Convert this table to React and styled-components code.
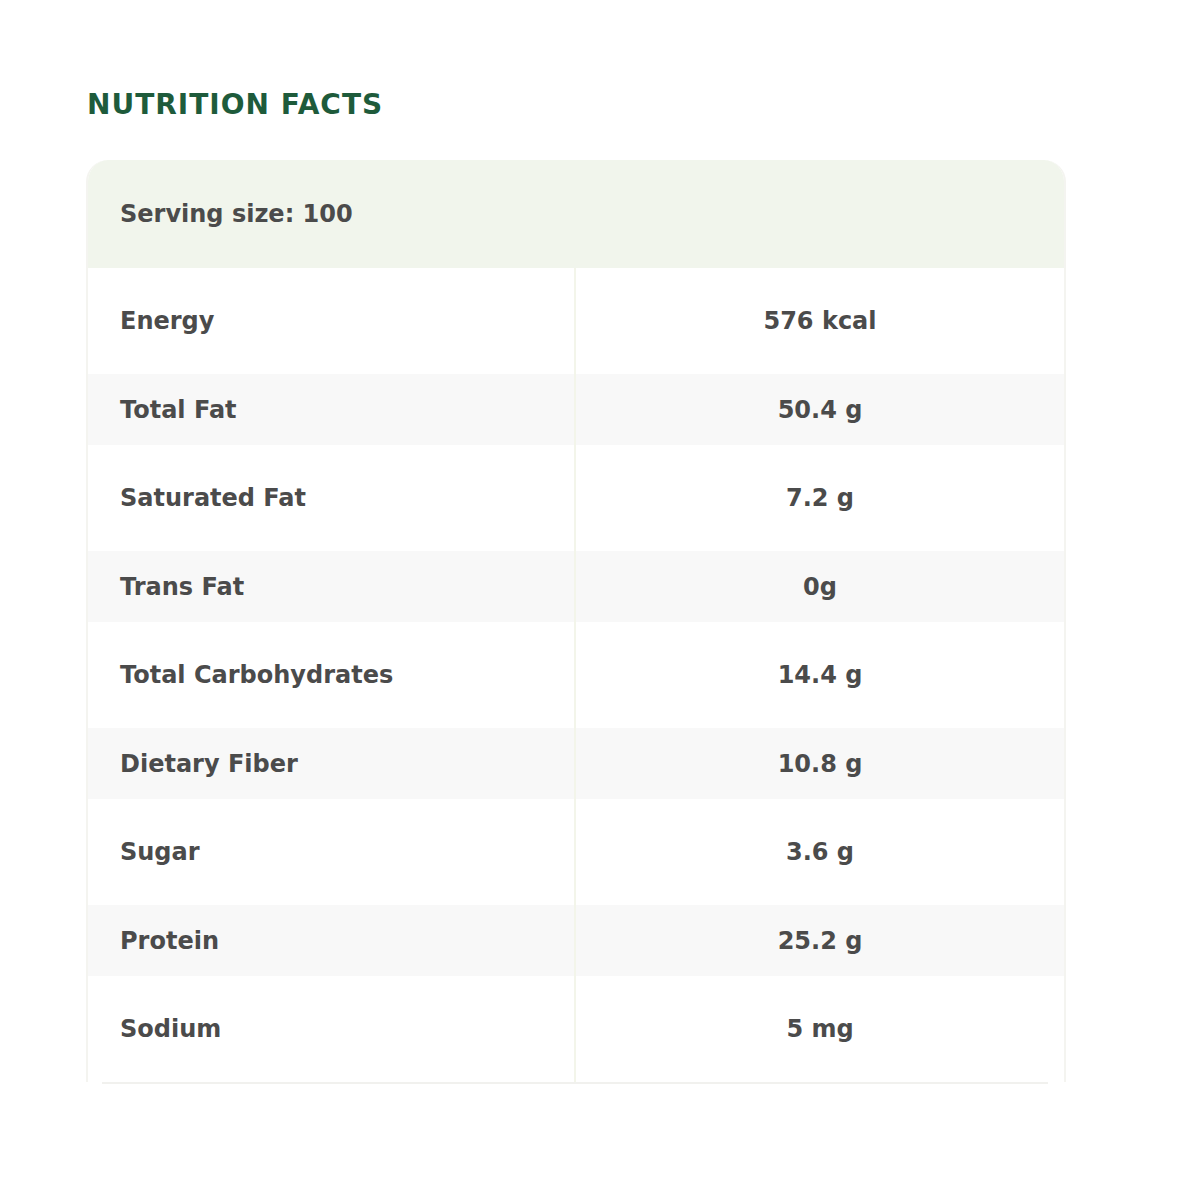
import styled, { createGlobalStyle } from "styled-components";

const GlobalStyle = createGlobalStyle`
  body {
    margin: 0;
    background: #ffffff;
    font-family: "DejaVu Sans", "Open Sans", sans-serif;
  }
`;

const nutrients = [
  { name: "Energy", value: "576 kcal" },
  { name: "Total Fat", value: "50.4 g" },
  { name: "Saturated Fat", value: "7.2 g" },
  { name: "Trans Fat", value: "0g" },
  { name: "Total Carbohydrates", value: "14.4 g" },
  { name: "Dietary Fiber", value: "10.8 g" },
  { name: "Sugar", value: "3.6 g" },
  { name: "Protein", value: "25.2 g" },
  { name: "Sodium", value: "5 mg" },
];

const Page = styled.section`
  padding: 88px 134px 100px 86px;
`;

const Title = styled.h2`
  margin: 0 0 38px 1px;
  font-size: 28px;
  font-weight: 700;
  letter-spacing: 1px;
  color: #1e5b3b;
  line-height: 34px;
`;

const Card = styled.div`
  width: 980px;
  border-radius: 22px 22px 0 0;
  overflow: hidden;
  border-left: 2px solid #f4f4f0;
  border-right: 2px solid #f4f4f0;
  box-sizing: border-box;
`;

const Header = styled.div`
  height: 108px;
  display: flex;
  align-items: center;
  padding-left: 32px;
  background: #f1f5ec;
  font-size: 24px;
  font-weight: 600;
  color: #4b4b4b;
`;

const Row = styled.div`
  display: grid;
  grid-template-columns: 488px 1fr;
  height: ${({ $shaded }) => ($shaded ? "71px" : "106px")};
  background: ${({ $shaded }) => ($shaded ? "#f8f8f8" : "#ffffff")};
`;

const Cell = styled.div`
  display: flex;
  align-items: center;
  justify-content: ${({ $center }) => ($center ? "center" : "flex-start")};
  padding-left: ${({ $center }) => ($center ? "0" : "32px")};
  font-size: 24px;
  font-weight: 600;
  color: #4b4b4b;
  border-right: ${({ $center }) => ($center ? "none" : "2px solid #f3f5ea")};
`;

const Footer = styled.div`
  margin: 0 16px;
  height: 2px;
  background: #f1f1ee;
  width: 946px;
`;

export default function App() {
  return (
    <Page>
      <GlobalStyle />
      <Title>NUTRITION FACTS</Title>
      <Card>
        <Header>Serving size: 100</Header>
        {nutrients.map((item, index) => (
          <Row key={item.name} $shaded={index % 2 === 1}>
            <Cell>{item.name}</Cell>
            <Cell $center>{item.value}</Cell>
          </Row>
        ))}
      </Card>
      <Footer />
    </Page>
  );
}
